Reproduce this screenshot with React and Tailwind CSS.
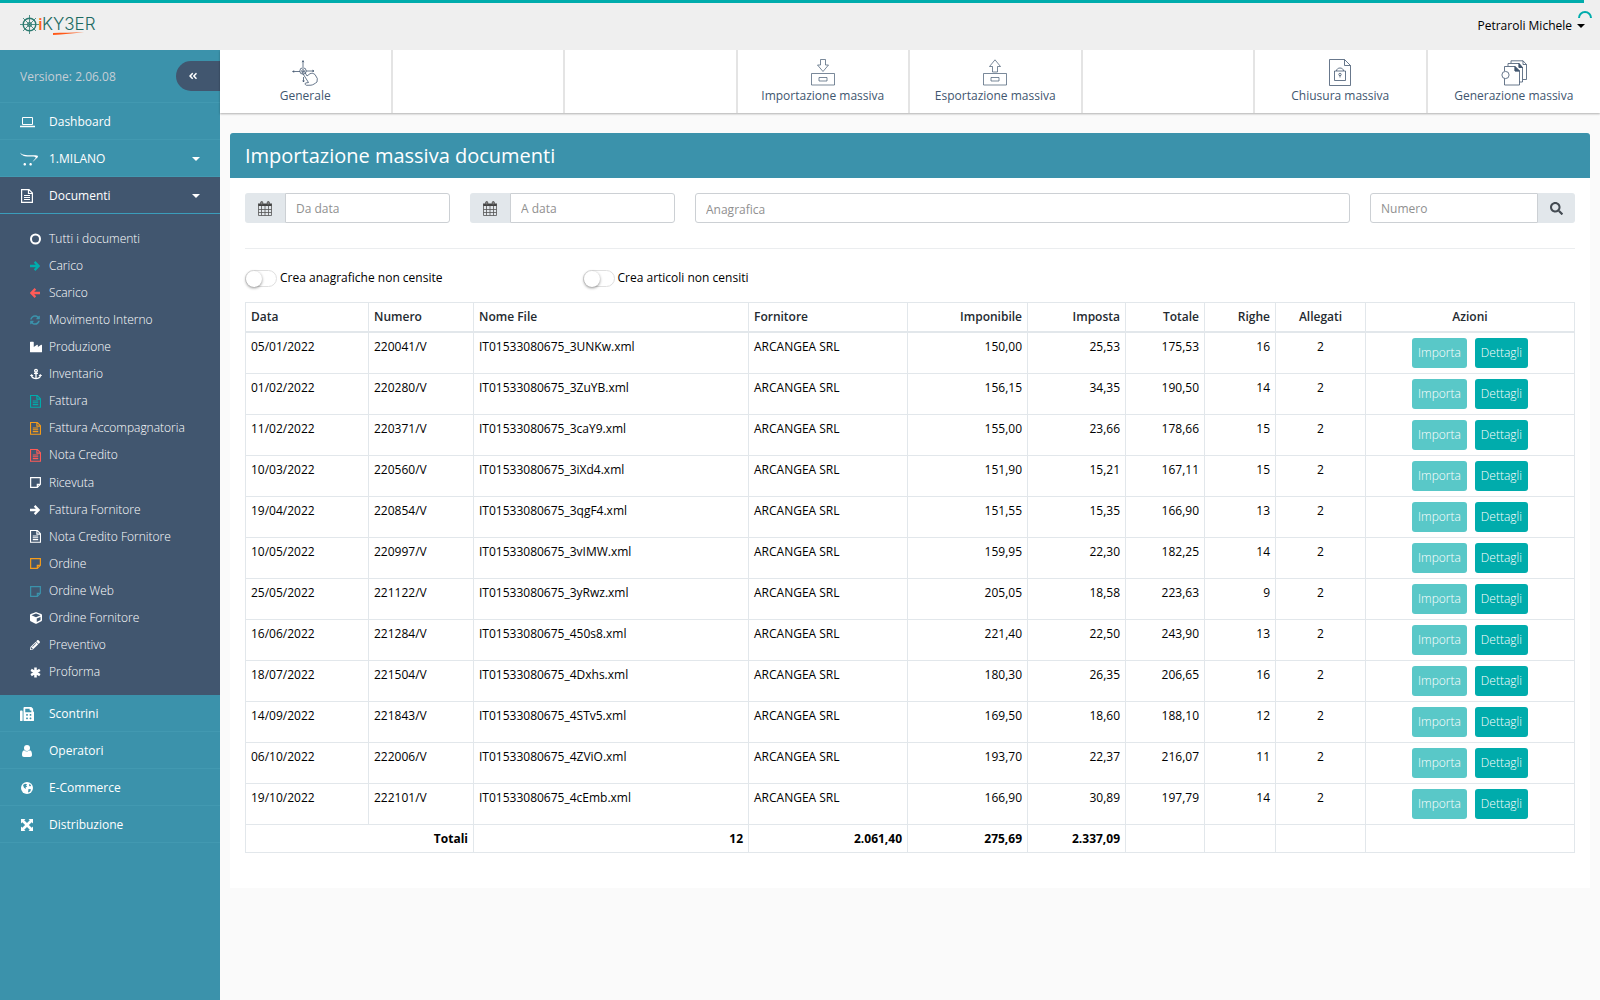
import React from "react";
import { FaIndustry, FaAnchor, FaCube, FaSearch, FaAngleDoubleLeft, FaFax, FaOpencart, FaPencilAlt, FaSyncAlt } from "react-icons/fa";

function FileText({ className }) {
  return (
    <svg viewBox="0 0 12 14" className={className} fill="none" stroke="currentColor">
      <path d="M.6.6H8L11.400 4V13.400H.6ZM7.500.6V4.500H11.400M3 6.500H9M3 8.500H9M3 10.500H9" strokeWidth="1.200" />
    </svg>
  );
}

function Note({ className }) {
  return (
    <svg viewBox="0 0 12 12" className={className} fill="none" stroke="currentColor">
      <path d="M.7.7H11.300V8L8 11.300H.7ZM8 11.300V8H11.300" strokeWidth="1.300" />
    </svg>
  );
}

function Ring({ className }) {
  return (
    <svg viewBox="0 0 12 12" className={className} fill="none" stroke="currentColor">
      <circle cx="5.500" cy="6" r="4.500" strokeWidth="2" />
    </svg>
  );
}

function Caret() {
  return (
    <svg viewBox="0 0 8 4" className="h-1 w-2" fill="currentColor">
      <path d="M0 0H8L4 4Z" />
    </svg>
  );
}

function Arrow({ className }) {
  return (
    <svg viewBox="0 0 10 10" className={className} fill="none" stroke="currentColor">
      <path d="M0 5H8.500M4.600.9L8.700 5L4.600 9.100" strokeWidth="2.300" />
    </svg>
  );
}

function Asterisk() {
  return (
    <svg viewBox="0 0 12 12" className="w-[11px]" fill="none" stroke="currentColor">
      <path d="M6 .5V11.500M1.200 3.200L10.800 8.800M10.800 3.200L1.200 8.800" strokeWidth="2.800" />
    </svg>
  );
}

function Laptop() {
  return (
    <svg viewBox="0 0 15 12" className="w-[15px]" fill="none" stroke="currentColor">
      <path d="M2.500 1.500H12.500V8.500H2.500Z" />
      <path d="M0 10.500H15" strokeWidth="1.500" />
    </svg>
  );
}

function Person() {
  return (
    <svg viewBox="0 0 10 12" className="w-[10px]" fill="currentColor">
      <circle cx="5" cy="3" r="3" />
      <path d="M2.200 5.200C3.500 6.800 6.500 6.800 7.800 5.200C9.500 5.400 10 7.500 10 9.800C10 11.200 9.200 12 8 12H2C.8 12 0 11.200 0 9.800C0 7.500.5 5.400 2.200 5.200Z" />
    </svg>
  );
}

function Globe() {
  return (
    <svg viewBox="0 0 12 12" className="w-3">
      <circle cx="6" cy="6" r="6" fill="currentColor" />
      <path d="M2 3L4 1.800L6.200 2.200L5 3.500L6.200 4.500L4.500 5.500L5 7L3 5.800ZM7.500 7L10 7.200L9.200 9.500L7 10.500ZM8.500 1.800L10.200 3.500L9 4.500L8 3.500Z" fill="#3b92ab" />
    </svg>
  );
}

function Expand() {
  return (
    <svg viewBox="0 0 12 12" className="w-3" fill="currentColor">
      <path d="M0 0H4.500L3.200 1.300L6 4.100L8.800 1.300L7.500 0H12V4.500L10.700 3.200L7.900 6L10.700 8.800L12 7.500V12H7.500L8.800 10.700L6 7.900L3.200 10.700L4.500 12H0V7.500L1.300 8.800L4.100 6L1.300 3.200L0 4.500Z" />
    </svg>
  );
}

function Calendar() {
  return (
    <svg viewBox="0 0 14 15" className="w-[14px]" stroke="#555" fill="none">
      <path d="M0 2.500H14V5H0Z" fill="#444" stroke="none" />
      <path d="M.5 3V14.500H13.500V3M.5 8.500H13.500M.5 11.500H13.500M3.500 5V14.500M7 5V14.500M10.500 5V14.500" strokeWidth=".8" />
      <rect x="2.700" y=".6" width="2" height="3" rx=".8" fill="#8a8a8a" />
      <rect x="9.300" y=".6" width="2" height="3" rx=".8" fill="#8a8a8a" />
    </svg>
  );
}

function Logo() {
  return (
    <a href="#" aria-label="iKYBER" className="block">
      <svg viewBox="0 0 78 24" className="h-6 w-[78px]" fill="none">
        <g stroke="#2c7a70">
          <circle cx="9.500" cy="11.500" r="6.300" strokeWidth="1.400" />
          <circle cx="9.500" cy="11.500" r="2" strokeWidth="1" />
          <path d="M9.500 2V21M0 11.500H19M3 5L16 18M16 5L3 18" strokeWidth=".8" />
        </g>
        <text x="18" y="17" fontFamily="Open Sans" fontSize="17" fontWeight="600" fill="#ff6418">i</text>
        <text x="22" y="17" fontFamily="Inter" fontSize="17" fontWeight="300" fill="#1d6b62">KY3ER</text>
        <path d="M33 20C42 19.800 52 19.400 64 19.200C54 20.400 43 21.200 33 22Z" fill="#ff5a1a" />
      </svg>
    </a>
  );
}

function TapIcon() {
  return (
    <svg viewBox="0 0 26 26" className="size-[26px]" fill="none" stroke="currentColor" strokeWidth=".8">
      <path d="M11 .8V7M10.200 2.200L11 .6L11.800 2.200M.8 11.500H8M2.200 10.700L.6 11.500L2.200 12.300M14 11H22M20.300 10.200L22 11L20.300 11.800M11.500 17V22M10.700 20.500L11.500 22L12.300 20.500" />
      <circle cx="11" cy="11" r="3.200" />
      <circle cx="11" cy="11" r="1.300" />
      <path d="M10.200 12.500C10.500 10.800 12.200 10.800 13 12.500L15 16M10.200 12.500L16.500 22.500L13.500 23C12.800 24 13.300 25 14.500 25.300L19 25.200C21 25 23 23.500 25 22L25.300 18.500L23 14.500C21.500 13.300 19.500 13 18 13.700L15 16" />
    </svg>
  );
}

function TrayIcon({ up }) {
  return (
    <svg viewBox="0 0 24 27" className="h-[27px] w-6" fill="none" stroke="currentColor" strokeWidth=".7">
      <path d={up ? "M12 .8L17.500 7.500H14.500V13H9.500V7.500H6.500Z" : "M9.500.5H14.500V6H17.500L12 12.500L6.500 6H9.500Z"} />
      <path d="M.5 14.500H23.500V26H.5ZM8 18.500H16V22H8Z" />
    </svg>
  );
}

function LockIcon() {
  return (
    <svg viewBox="0 0 22 27" className="h-[27px] w-[22px]" fill="none" stroke="currentColor" strokeWidth=".8">
      <path d="M.5.5H15.500L21.500 6.500V26.500H.5ZM15.500.5V6.500H21.500M5.500 12H16.500V21.500H5.500ZM7.500 12C7.500 8 14.500 8 14.500 12M11 16.500V18.500" />
      <circle cx="11" cy="15.500" r="1.200" />
    </svg>
  );
}

function StackIcon() {
  return (
    <svg viewBox="0 0 26 26" className="size-[26px]" fill="none" stroke="currentColor" strokeWidth=".8">
      <path d="M10 3V.8H22L25.500 4.500V19.500H22M7 6V3.500H18L21.500 7.500V22H18.500M3.500 11V6.500H14L18.500 11V25H3.500V18.500M14 6.500V11H18.500M18 3.500V7.500H21.500M22 .8V4.500H25.500" />
      <path d="M14 6.500L18.500 11H14ZM18 3.500L21.500 7.500H18Z" fill="currentColor" />
      <circle cx="4.500" cy="15" r="3.600" />
    </svg>
  );
}

const tabs = [
  { label: "Generale", icon: <TapIcon /> },
  null,
  null,
  { label: "Importazione massiva", icon: <TrayIcon /> },
  { label: "Esportazione massiva", icon: <TrayIcon up /> },
  null,
  { label: "Chiusura massiva", icon: <LockIcon /> },
  { label: "Generazione massiva", icon: <StackIcon /> },
];

const documentLinks = [
  ["Tutti i documenti", <Ring className="w-3" />],
  ["Carico", <Arrow className="w-[10px] text-[#00acac]" />],
  ["Scarico", <Arrow className="w-[10px] rotate-180 text-[#ff5b57]" />],
  ["Movimento Interno", <FaSyncAlt className="text-[10px] text-[#3b92ab]" />],
  ["Produzione", <FaIndustry className="text-[12px]" />],
  ["Inventario", <FaAnchor className="text-[12px]" />],
  ["Fattura", <FileText className="w-[11px] text-[#00acac]" />],
  ["Fattura Accompagnatoria", <FileText className="w-[11px] text-[#f59c1a]" />],
  ["Nota Credito", <FileText className="w-[11px] text-[#ff5b57]" />],
  ["Ricevuta", <Note className="w-[11px]" />],
  ["Fattura Fornitore", <Arrow className="w-[10px]" />],
  ["Nota Credito Fornitore", <FileText className="w-[11px]" />],
  ["Ordine", <Note className="w-[11px] text-[#f59c1a]" />],
  ["Ordine Web", <Note className="w-[11px] text-[#3b92ab]" />],
  ["Ordine Fornitore", <FaCube className="text-[12px]" />],
  ["Preventivo", <FaPencilAlt className="text-[10px]" />],
  ["Proforma", <Asterisk />],
];

const rows = [
  ["05/01/2022", "220041/V", "IT01533080675_3UNKw.xml", "150,00", "25,53", "175,53", "16"],
  ["01/02/2022", "220280/V", "IT01533080675_3ZuYB.xml", "156,15", "34,35", "190,50", "14"],
  ["11/02/2022", "220371/V", "IT01533080675_3caY9.xml", "155,00", "23,66", "178,66", "15"],
  ["10/03/2022", "220560/V", "IT01533080675_3iXd4.xml", "151,90", "15,21", "167,11", "15"],
  ["19/04/2022", "220854/V", "IT01533080675_3qgF4.xml", "151,55", "15,35", "166,90", "13"],
  ["10/05/2022", "220997/V", "IT01533080675_3vIMW.xml", "159,95", "22,30", "182,25", "14"],
  ["25/05/2022", "221122/V", "IT01533080675_3yRwz.xml", "205,05", "18,58", "223,63", "9"],
  ["16/06/2022", "221284/V", "IT01533080675_450s8.xml", "221,40", "22,50", "243,90", "13"],
  ["18/07/2022", "221504/V", "IT01533080675_4Dxhs.xml", "180,30", "26,35", "206,65", "16"],
  ["14/09/2022", "221843/V", "IT01533080675_4STv5.xml", "169,50", "18,60", "188,10", "12"],
  ["06/10/2022", "222006/V", "IT01533080675_4ZViO.xml", "193,70", "22,37", "216,07", "11"],
  ["19/10/2022", "222101/V", "IT01533080675_4cEmb.xml", "166,90", "30,89", "197,79", "14"],
];

const columns = [
  ["Data", "w-[123px]", "text-left"],
  ["Numero", "w-[105px]", "text-left"],
  ["Nome File", "", "text-left"],
  ["Fornitore", "w-[159px]", "text-left"],
  ["Imponibile", "w-[120px]", "text-right"],
  ["Imposta", "w-[98px]", "text-right"],
  ["Totale", "w-[79px]", "text-right"],
  ["Righe", "w-[71px]", "text-right"],
  ["Allegati", "w-[90px]", "text-center"],
  ["Azioni", "w-[209px]", "text-center"],
];

function NavItem({ icon, label, caret, active }) {
  return (
    <a
      href="#"
      className={
        "flex h-[37px] items-center border-b px-5 pt-0.5 font-medium " +
        (active ? "border-[#3b9dbb] bg-[#41566f]" : "border-[#4299b1]")
      }
    >
      <span className="flex w-[29px] items-center">{icon}</span>
      <span className="flex-1">{label}</span>
      {caret && <Caret />}
    </a>
  );
}

function Sidebar() {
  return (
    <aside className="w-[220px] shrink-0 bg-[#3b92ab] text-white">
      <div className="flex h-[53px] items-center justify-between border-b border-[#4299b1] pl-5">
        <span className="pt-0.5 font-medium text-[#c5ced6]">Versione: 2.06.08</span>
        <button type="button" aria-label="Comprimi menu" className="flex h-[30px] w-11 items-center rounded-l-full bg-[#41566f] pl-3">
          <FaAngleDoubleLeft className="text-[10px]" />
        </button>
      </div>
      <nav>
        <NavItem icon={<Laptop />} label="Dashboard" />
        <NavItem icon={<FaOpencart className="text-[18px]" />} label="1.MILANO" caret />
        <NavItem icon={<span className="pl-px"><FileText className="w-3" /></span>} label="Documenti" caret active />
        <ul className="grid min-h-[481px] auto-rows-fr bg-[#41566f] pb-[9px] pt-[11px] font-light">
          {documentLinks.map(([label, icon]) => (
            <li key={label}>
              <a href="#" className="flex h-full items-center pl-[30px]">
                <span className="flex w-[19px] items-center">{icon}</span>
                {label}
              </a>
            </li>
          ))}
        </ul>
        <NavItem icon={<FaFax className="text-[14px]" />} label="Scontrini" />
        <NavItem icon={<span className="pl-0.5"><Person /></span>} label="Operatori" />
        <NavItem icon={<span className="pl-px"><Globe /></span>} label="E-Commerce" />
        <NavItem icon={<span className="pl-px"><Expand /></span>} label="Distribuzione" />
      </nav>
    </aside>
  );
}

function DateField({ label }) {
  return (
    <label className="col-span-2 flex h-[30px]">
      <span className="flex w-10 shrink-0 items-center justify-center rounded-l-[3px] bg-[#e2e7eb]">
        <Calendar />
      </span>
      <input
        type="text"
        aria-label={label}
        placeholder={label}
        className="w-full min-w-0 rounded-r-[3px] border border-[#ccd0d4] bg-white px-[10px] pt-0.5 placeholder:text-[#909090]"
      />
    </label>
  );
}

function Switch({ label }) {
  return (
    <label className="col-span-3 flex items-center gap-[3px]">
      <input
        type="checkbox"
        role="switch"
        className="h-[17px] w-8 appearance-none rounded-full border border-[#dfdfdf] bg-white before:block before:size-4 before:rounded-full before:bg-white before:shadow-[0_1px_3px_rgba(0,0,0,0.45)]"
      />
      {label}
    </label>
  );
}

const cell = "border border-[#e2e7eb] px-[5px] ";

function DocumentsTable() {
  return (
    <table className="w-full table-fixed border-collapse">
      <thead>
        <tr className="h-[29px] text-[#242a30]">
          {columns.map(([name, width, align]) => (
            <th key={name} scope="col" className={cell + "border-b-2 font-semibold " + width + " " + align}>
              {name}
            </th>
          ))}
        </tr>
      </thead>
      <tbody>
        {rows.map(([date, number, file, net, tax, total, lines]) => (
          <tr key={number} className="align-top">
            <td className={cell + "py-[5px]"}>{date}</td>
            <td className={cell + "py-[5px]"}>{number}</td>
            <td className={cell + "py-[5px]"}>{file}</td>
            <td className={cell + "py-[5px]"}>ARCANGEA SRL</td>
            <td className={cell + "py-[5px] text-right"}>{net}</td>
            <td className={cell + "py-[5px] text-right"}>{tax}</td>
            <td className={cell + "py-[5px] text-right"}>{total}</td>
            <td className={cell + "py-[5px] text-right"}>{lines}</td>
            <td className={cell + "py-[5px] text-center"}>2</td>
            <td className={cell + "py-[5px]"}>
              <div className="flex justify-center gap-2 font-light text-white">
                <button type="button" className="h-[30px] rounded-[3px] bg-[#59c8c8] px-1.5">Importa</button>
                <button type="button" className="h-[30px] rounded-[3px] bg-[#00acac] px-1.5">Dettagli</button>
              </div>
            </td>
          </tr>
        ))}
      </tbody>
      <tfoot>
        <tr className="h-7 text-right font-bold">
          <td colSpan={2} className={cell + "pt-0.5"}>Totali</td>
          <td className={cell + "pt-0.5"}>12</td>
          <td className={cell + "pt-0.5"}>2.061,40</td>
          <td className={cell + "pt-0.5"}>275,69</td>
          <td className={cell + "pt-0.5"}>2.337,09</td>
          <td className={cell} />
          <td className={cell} />
          <td className={cell} />
          <td className={cell} />
        </tr>
      </tfoot>
    </table>
  );
}

export default function App() {
  return (
    <div className="flex min-h-screen flex-col bg-[#fafafa] font-['Open_Sans',sans-serif] text-[12px] leading-[18px] text-black">
      <header className="relative flex h-[50px] items-center justify-between bg-[#efefef] pl-5 pr-[15px]">
        <div className="absolute left-0 top-0 h-[3px] w-[99%] bg-[#00acac]" />
        <Logo />
        <button type="button" className="flex items-center gap-[5px] pt-0.5">
          Petraroli Michele
          <Caret />
        </button>
        <svg viewBox="0 0 14 14" className="absolute right-2 top-[11px] size-[14px]" fill="none" stroke="#00acac" strokeWidth="2">
          <path d="M1 7A6 6 0 0 1 13 7" />
        </svg>
      </header>
      <div className="flex flex-1">
        <Sidebar />
        <main className="min-w-0 flex-1">
          <nav className="grid grid-cols-8 divide-x-2 divide-[#e4e4e4] bg-white text-[#41566f] shadow-[0_1px_2px_rgba(0,0,0,0.3)]">
            {tabs.map((tab, i) =>
              tab ? (
                <a key={i} href="#" className="flex h-[63px] flex-col items-center pt-2">
                  <span className="flex h-[29px] items-center">{tab.icon}</span>
                  {tab.label}
                </a>
              ) : (
                <div key={i} className="h-[63px]" />
              )
            )}
          </nav>
          <section className="mx-[10px] mt-5 bg-white">
            <h1 className="flex h-[45px] items-center rounded-t-[3px] bg-[#3b92ab] px-[15px] text-[20px] text-white">
              Importazione massiva documenti
            </h1>
            <div className="px-[15px] pb-[35px] pt-[15px]">
              <form className="grid grid-cols-12 gap-5">
                <DateField label="Da data" />
                <DateField label="A data" />
                <input
                  type="text"
                  aria-label="Anagrafica"
                  placeholder="Anagrafica"
                  className="col-span-6 h-[30px] rounded-[3px] border border-[#ccd0d4] bg-white px-[10px] pt-0.5 placeholder:text-[#909090]"
                />
                <div className="col-span-2 flex h-[30px]">
                  <input
                    type="text"
                    aria-label="Numero"
                    placeholder="Numero"
                    className="w-full min-w-0 rounded-l-[3px] border border-[#ccd0d4] bg-white px-[10px] pt-0.5 placeholder:text-[#909090]"
                  />
                  <button type="button" aria-label="Cerca" className="flex w-[37px] shrink-0 items-center justify-center rounded-r-[3px] bg-[#e2e7eb] text-[#444b52]">
                    <FaSearch className="text-[13px]" />
                  </button>
                </div>
              </form>
              <hr className="mt-[25px] border-[#ebedef]" />
              <div className="mb-[15px] mt-5 grid grid-cols-12 gap-5">
                <Switch label="Crea anagrafiche non censite" />
                <Switch label="Crea articoli non censiti" />
              </div>
              <DocumentsTable />
            </div>
          </section>
        </main>
      </div>
    </div>
  );
}
